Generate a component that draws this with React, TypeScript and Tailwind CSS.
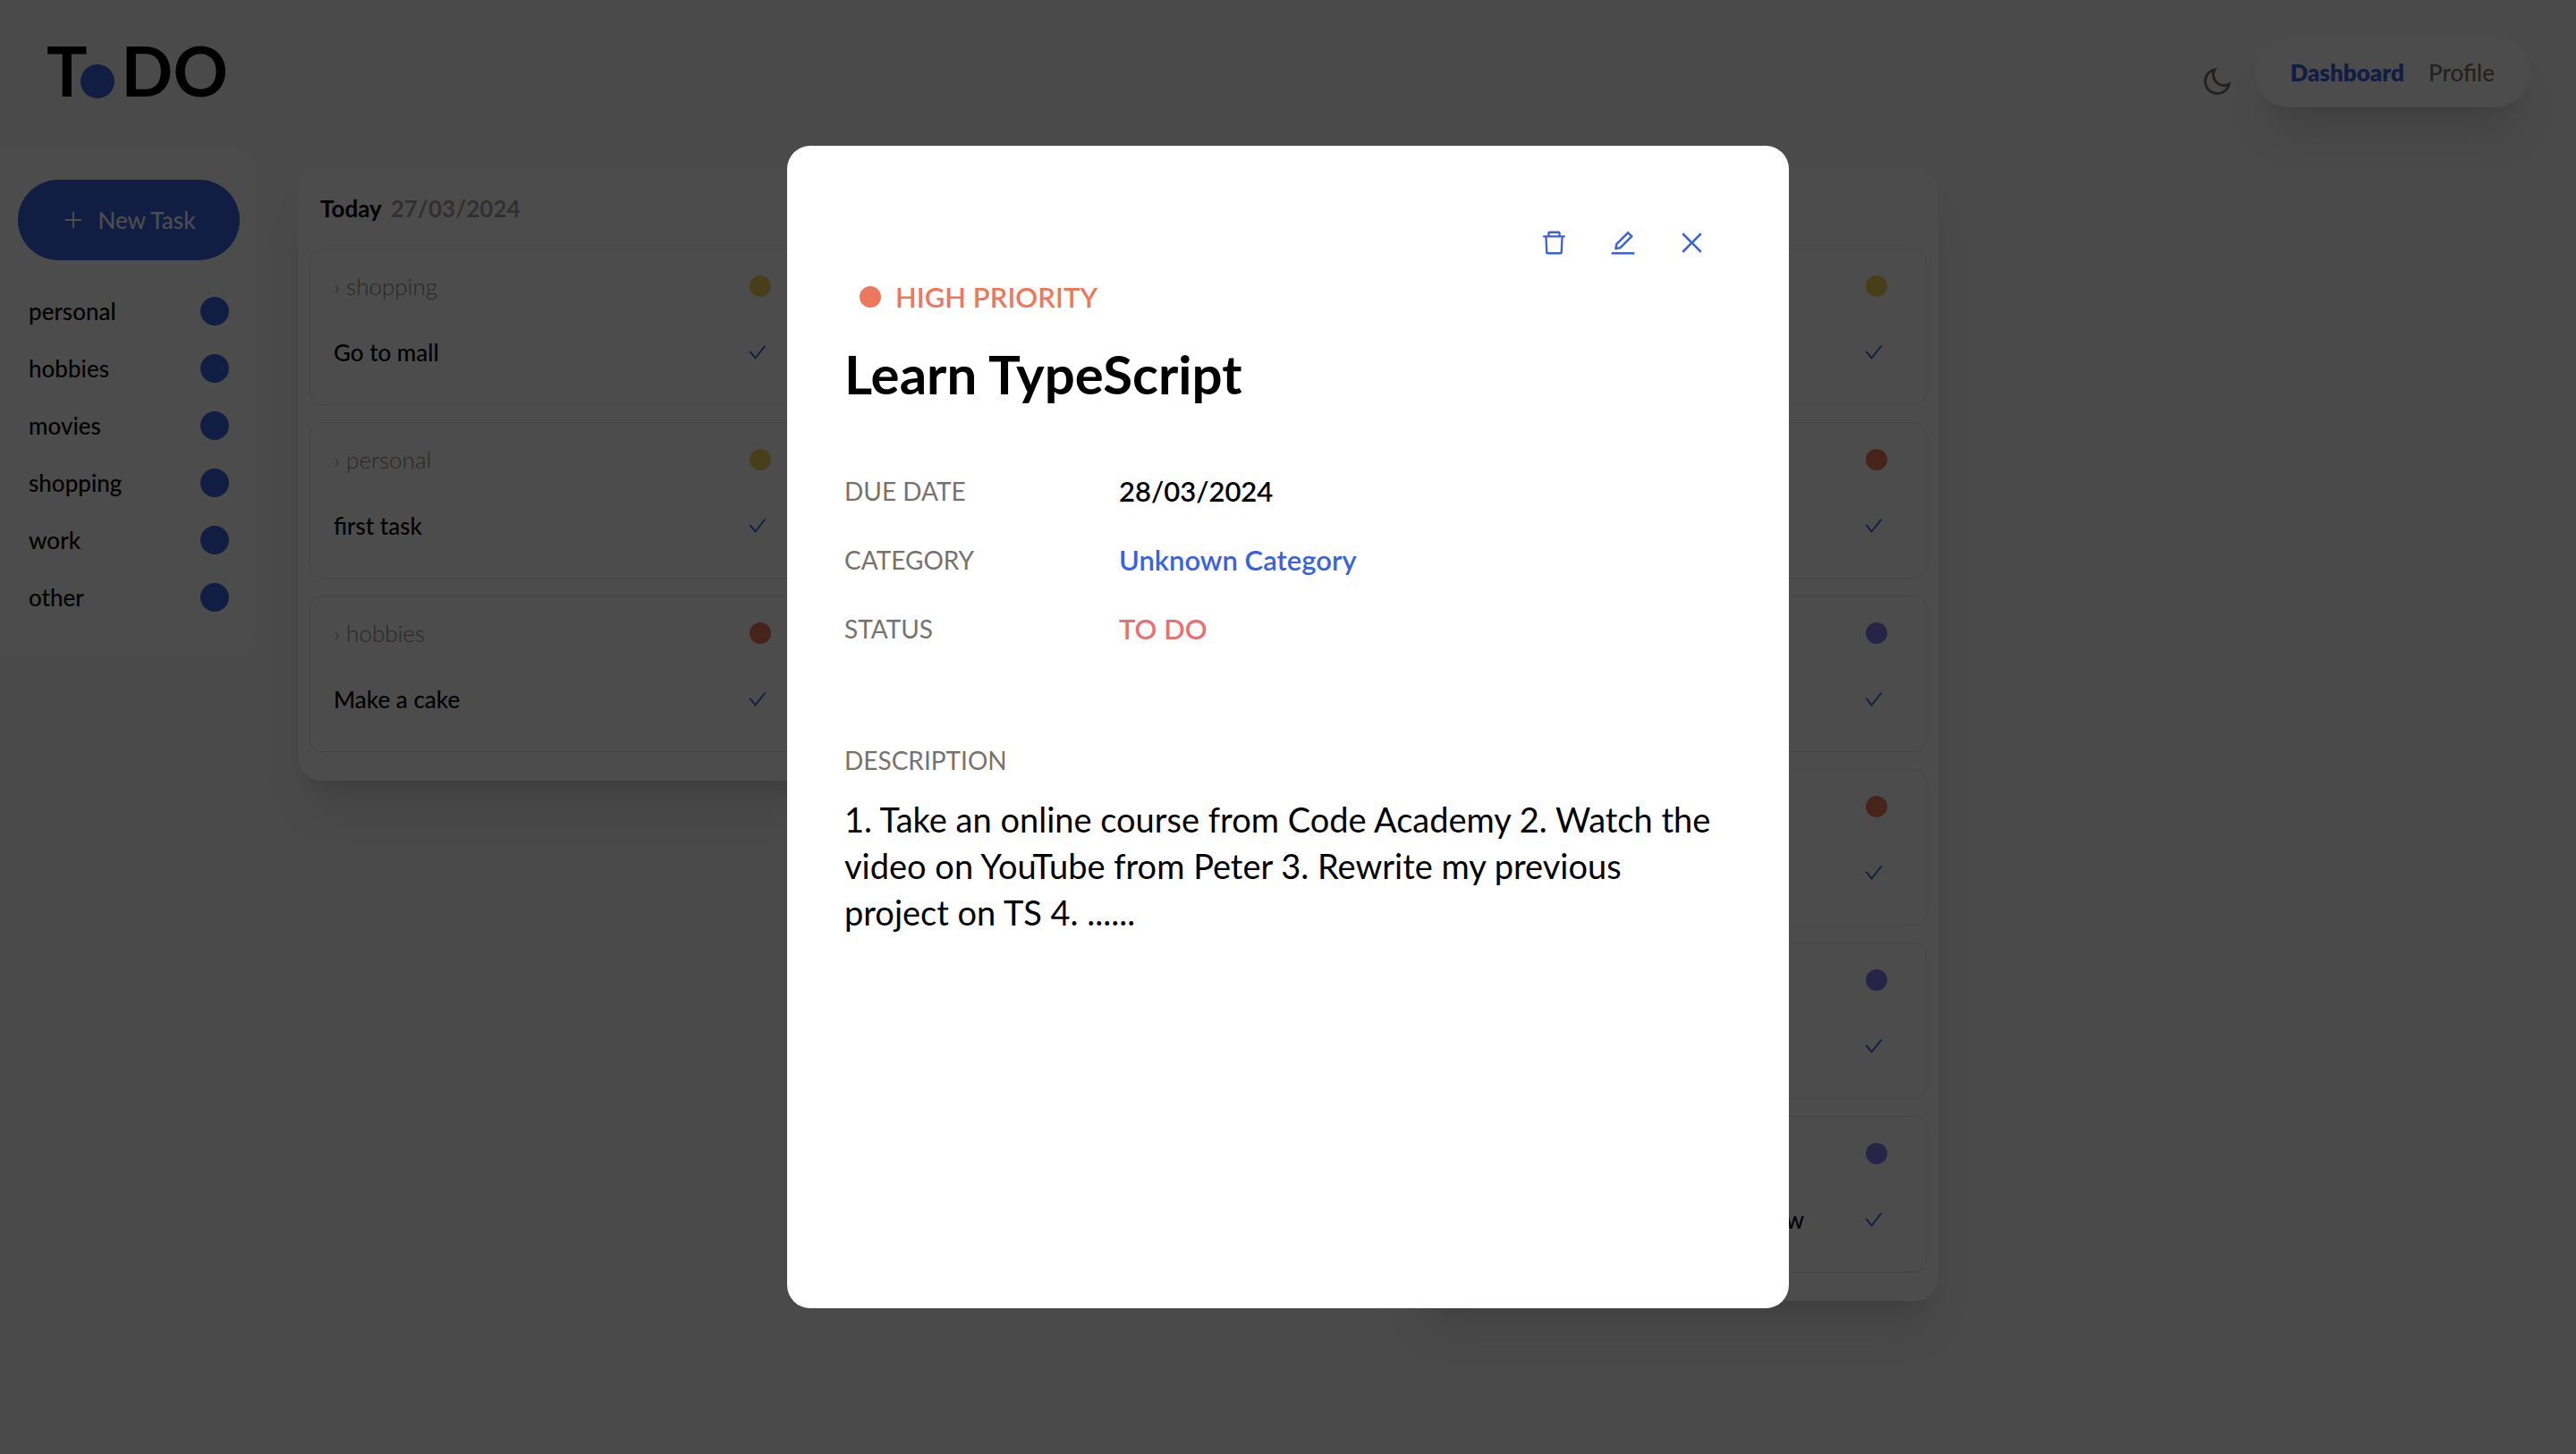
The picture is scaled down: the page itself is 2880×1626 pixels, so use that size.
import React from "react";
import {
  AiOutlineCheck,
  AiOutlineClose,
  AiOutlineDelete,
  AiOutlineEdit,
  AiOutlinePlus,
} from "react-icons/ai";

type Level = "low" | "medium" | "high";

interface Task {
  category?: string;
  title?: string;
  level: Level;
}

const CATEGORIES = ["personal", "hobbies", "movies", "shopping", "work", "other"];

const TODAY: Task[] = [
  { category: "shopping", title: "Go to mall", level: "medium" },
  { category: "personal", title: "first task", level: "medium" },
  { category: "hobbies", title: "Make a cake", level: "high" },
];

const LATER: Task[] = [
  { level: "medium" },
  { level: "high" },
  { level: "low" },
  { level: "high" },
  { level: "low" },
  { title: "w", level: "low" },
];

const DOT: Record<Level, string> = {
  low: "bg-[#8678f0]",
  medium: "bg-[#f5cf57]",
  high: "bg-[#ec795d]",
};

const SHADOW = "shadow-[0_40px_50px_-10px_rgba(0,0,0,0.1),0_16px_20px_-12px_rgba(0,0,0,0.1)]";

function MoonIcon() {
  return (
    <svg viewBox="0 0 24 24" className="size-9" fill="currentColor" aria-hidden="true">
      <path d="M10 7C10 10.866 13.134 14 17 14C18.9584 14 20.729 13.1957 21.9995 11.8995C22 11.933 22 11.9665 22 12C22 17.5228 17.5228 22 12 22C6.47715 22 2 17.5228 2 12C2 6.47715 6.47715 2 12 2C12.0335 2 12.067 2 12.1005 2.00049C10.8043 3.27098 10 5.04157 10 7ZM4 12C4 16.4183 7.58172 20 12 20C15.0583 20 17.7158 18.2839 19.062 15.7621C18.3945 15.9187 17.7035 16 17 16C12.0294 16 8 11.9706 8 7C8 6.29648 8.08133 5.60547 8.2379 4.938C5.71611 6.28423 4 8.9417 4 12Z" />
    </svg>
  );
}

function Header() {
  return (
    <header className="flex h-[164px] items-start justify-between px-[52px] pt-10">
      <a href="#" className="flex items-end text-[76px] leading-[78px] font-bold text-black">
        <span>T</span>
        <span className="mb-2 -ml-2 size-[38px] rounded-full bg-[#3b62dd]" />
        <span className="ml-2">DO</span>
      </a>
      <div className="flex items-center gap-6 pt-[3px]">
        <button type="button" aria-label="Toggle dark mode" className="pt-[18px] text-[#78716c]">
          <MoonIcon />
        </button>
        <nav className={`flex h-[77px] items-center gap-[27px] rounded-full bg-white px-[39px] text-[26px] ${SHADOW}`}>
          <a href="#" className="font-extrabold text-[#3b62dd]">Dashboard</a>
          <a href="#" className="font-medium text-[#78716c]">Profile</a>
        </nav>
      </div>
    </header>
  );
}

function Sidebar() {
  return (
    <aside className="w-72 shrink-0 rounded-r-[38px] bg-white pt-[37px] pb-[52px]">
      <button
        type="button"
        className="mx-5 flex h-[90px] w-[248px] items-center justify-center gap-[14px] rounded-full bg-[#3b62dd] text-[26px] font-medium text-white"
      >
        <AiOutlinePlus className="size-[26px]" />
        New Task
      </button>
      <ul className="mt-[41px] flex flex-col gap-8 px-8 text-[26px] leading-8 font-medium text-black">
        {CATEGORIES.map((name) => (
          <li key={name} className="flex items-center justify-between">
            {name}
            <span className="size-8 rounded-full bg-[#3b62dd]" />
          </li>
        ))}
      </ul>
    </aside>
  );
}

function TaskCard({ task }: { task: Task }) {
  return (
    <li className="h-[175px] rounded-[14px] border border-[#e5e5e5] pt-[25px] pr-[43px] pl-[26px] text-[26px] leading-8">
      <div className="flex h-8 items-center justify-between">
        <span className="font-light text-[#8c8682]">{task.category ? `› ${task.category}` : ""}</span>
        <span className={`size-6 rounded-full ${DOT[task.level]}`} />
      </div>
      <div className="mt-[42px] flex h-8 items-center justify-between font-medium">
        <span className={task.category ? "text-black" : "flex-1 pr-[66px] text-right text-black"}>{task.title}</span>
        <button type="button" aria-label="Complete task" className="mr-[3px] text-[#3b62dd]">
          <AiOutlineCheck className="size-6" />
        </button>
      </div>
    </li>
  );
}

function Column({ label, date, tasks }: { label?: string; date?: string; tasks: Task[] }) {
  return (
    <section className={`w-[586px] shrink-0 rounded-[26px] bg-white px-[13px] pb-8 ${SHADOW}`}>
      <h2 className="flex h-[90px] items-center gap-[10px] px-3 text-[26px] font-bold text-black">
        {label}
        <span className="text-[#a8a29e]">{date}</span>
      </h2>
      <ul className="flex flex-col gap-[19px]">
        {tasks.map((task, i) => (
          <TaskCard key={i} task={task} />
        ))}
      </ul>
    </section>
  );
}

function Field({ label, value, tone }: { label: string; value: string; tone: string }) {
  return (
    <div className="flex items-center leading-[45px]">
      <dt className="w-[307px] text-[28px] text-[#78716c]">{label}</dt>
      <dd className={`text-[31px] font-semibold ${tone}`}>{value}</dd>
    </div>
  );
}

function TaskDialog() {
  return (
    <div className="fixed inset-0 grid place-items-center bg-black/70">
      <div
        role="dialog"
        aria-modal="true"
        aria-labelledby="task-title"
        className="min-h-[1300px] w-[1120px] max-w-full rounded-[26px] bg-white px-16 pt-[92px]"
      >
        <div className="flex justify-end gap-11 pr-7 text-[#3b62dd]">
          <button type="button" aria-label="Delete task">
            <AiOutlineDelete className="size-[33px]" />
          </button>
          <button type="button" aria-label="Edit task">
            <AiOutlineEdit className="size-[33px]" />
          </button>
          <button type="button" aria-label="Close">
            <AiOutlineClose className="size-[33px]" />
          </button>
        </div>
        <p className="mt-6 flex items-center gap-4 pl-[17px] text-[31px] leading-10 font-semibold text-[#ec795d]">
          <span className="size-6 rounded-full bg-[#ec795d]" />
          HIGH PRIORITY
        </p>
        <h1 id="task-title" className="mt-[30px] text-[60px] leading-[72px] font-bold text-black">
          Learn TypeScript
        </h1>
        <dl className="mt-[73px] flex flex-col gap-8">
          <Field label="DUE DATE" value="28/03/2024" tone="text-black" />
          <Field label="CATEGORY" value="Unknown Category" tone="text-[#3b62dd]" />
          <Field label="STATUS" value="TO DO" tone="text-[#e57373]" />
        </dl>
        <h2 className="mt-[104px] text-[28px] leading-10 text-[#78716c]">DESCRIPTION</h2>
        <p className="mt-5 text-[38px] leading-[52px] text-black">
          1. Take an online course from Code Academy 2. Watch the video on YouTube from Peter 3. Rewrite my previous
          project on TS 4. ......
        </p>
      </div>
    </div>
  );
}

export default function App() {
  return (
    <div className="min-h-screen bg-[#f7f7f7] font-['Lato',sans-serif]">
      <Header />
      <div className="flex items-start">
        <Sidebar />
        <main className="flex items-start gap-[38px] pt-6 pl-[45px]">
          <Column label="Today" date="27/03/2024" tasks={TODAY} />
          <Column tasks={[]} />
          <Column tasks={LATER} />
        </main>
      </div>
      <TaskDialog />
    </div>
  );
}
